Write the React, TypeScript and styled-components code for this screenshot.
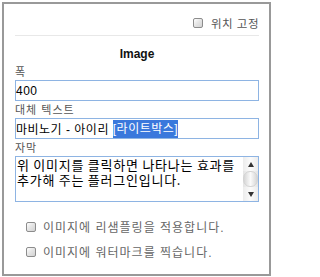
import React from "react";
import styled, { createGlobalStyle } from "styled-components";

const GlobalStyle = createGlobalStyle`
  body {
    margin: 0;
    background: #ffffff;
    font-family: "Liberation Sans", "Noto Sans CJK KR", sans-serif;
  }
`;

const Panel = styled.div`
  box-sizing: border-box;
  width: 269px;
  height: 274px;
  margin: 2px 0 0 2px;
  border: 2px solid #999999;
  padding: 9px 10px 0 11px;
  display: flex;
  flex-direction: column;
`;

const Header = styled.label`
  display: flex;
  justify-content: flex-end;
  align-items: center;
  gap: 8px;
  height: 20px;
  padding-bottom: 2px;
  border-bottom: 1px solid #e8e8e8;
  font-size: 11.5px;
  letter-spacing: 0.5px;
  color: #555555;
`;

const Box = styled.span`
  box-sizing: border-box;
  display: inline-block;
  flex: none;
  width: 10px;
  height: 10px;
  border: 1px solid #8c8c8c;
  border-radius: 2px;
  background: linear-gradient(135deg, #ffffff 0%, #e6e6e6 45%, #d2d2d2 100%);
`;

const Title = styled.div`
  margin: 11px 0 3px;
  line-height: 14px;
  font-size: 12px;
  font-weight: bold;
  text-align: center;
  color: #111111;
`;

const Label = styled.div<{ $gap?: number }>`
  line-height: 16px;
  font-size: 11px;
  letter-spacing: 1px;
  color: #555555;
  margin-top: ${(p) => p.$gap ?? 0}px;
`;

const Field = styled.div`
  box-sizing: border-box;
  height: 21px;
  border: 1px solid #8eb4e3;
  display: flex;
  align-items: center;
  padding: 0;
  font-size: 12px;
  letter-spacing: 0.5px;
  color: #000000;
  white-space: pre;
`;

const Selected = styled.span`
  background: #3a78dc;
  color: #ffffff;
  line-height: 18px;
`;

const Memo = styled.div`
  box-sizing: border-box;
  height: 46px;
  border: 1px solid #8eb4e3;
  display: flex;
`;

const MemoText = styled.div`
  flex: 1;
  padding: 0 0 0 1px;
  font-family: "Noto Sans CJK KR", sans-serif;
  font-size: 13px;
  line-height: 15px;
  letter-spacing: 0.75px;
  word-break: keep-all;
  color: #000000;
`;

const ScrollBar = styled.div`
  width: 15px;
  display: flex;
  flex-direction: column;
  background: linear-gradient(to right, #e4e4e4, #f6f6f6 50%, #e4e4e4);
`;

const ScrollButton = styled.div`
  height: 14px;
  display: flex;
  align-items: center;
  justify-content: center;
  background: linear-gradient(to right, #ececec, #fbfbfb 50%, #ececec);
`;

const Arrow = styled.span<{ $down?: boolean }>`
  width: 0;
  height: 0;
  border-left: 3.5px solid transparent;
  border-right: 3.5px solid transparent;
  ${(p) => (p.$down ? "border-top: 5px solid #333;" : "border-bottom: 5px solid #333;")}
`;

const Track = styled.div`
  flex: 1;
  display: flex;
  align-items: stretch;
`;

const Thumb = styled.div`
  flex: 1;
  border-radius: 7px;
  border: 1px solid #d4d4d4;
  background: linear-gradient(to right, #d6d6d6, #fafafa 50%, #d6d6d6);
`;

const Options = styled.div`
  margin-top: 12px;
  display: flex;
  flex-direction: column;
`;

const Option = styled.label`
  display: flex;
  align-items: center;
  gap: 7px;
  height: 25px;
  padding-left: 11px;
  font-size: 12px;
  letter-spacing: 1px;
  color: #666666;
`;

export default function App(): JSX.Element {
  return (
    <>
      <GlobalStyle />
      <Panel>
        <Header>
          <Box />
          위치 고정
        </Header>
        <Title>Image</Title>
        <Label>폭</Label>
        <Field>400</Field>
        <Label $gap={1}>대체 텍스트</Label>
        <Field>
          마비노기 - 아이리 <Selected>[라이트박스]</Selected>
        </Field>
        <Label $gap={1}>자막</Label>
        <Memo>
          <MemoText>위 이미지를 클릭하면 나타나는 효과를 추가해 주는 플러그인입니다.</MemoText>
          <ScrollBar>
            <ScrollButton>
              <Arrow />
            </ScrollButton>
            <Track>
              <Thumb />
            </Track>
            <ScrollButton>
              <Arrow $down />
            </ScrollButton>
          </ScrollBar>
        </Memo>
        <Options>
          <Option>
            <Box />
            이미지에 리샘플링을 적용합니다.
          </Option>
          <Option>
            <Box />
            이미지에 워터마크를 찍습니다.
          </Option>
        </Options>
      </Panel>
    </>
  );
}
